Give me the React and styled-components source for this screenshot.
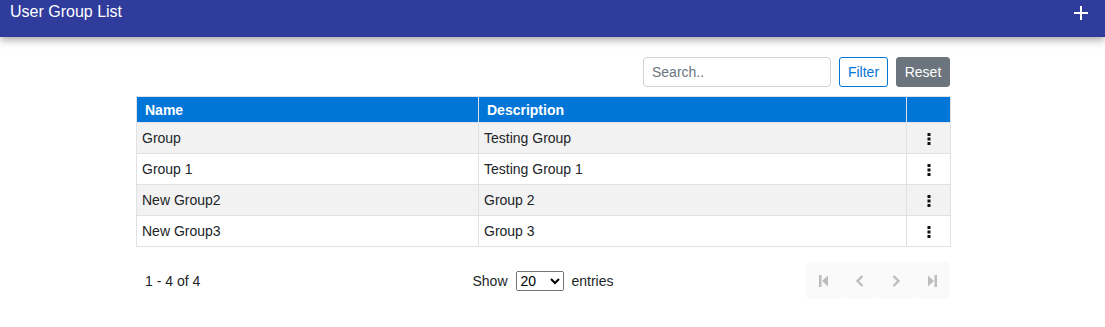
import React from 'react';
import styled, { createGlobalStyle } from 'styled-components';

const GlobalStyle = createGlobalStyle`
  body {
    margin: 0;
    font-family: "Liberation Sans", Arial, sans-serif;
    font-size: 14px;
    color: #212529;
    background: #fff;
  }
`;

const TopBar = styled.header`
  height: 37px;
  background: #2f3c9c;
  display: flex;
  justify-content: space-between;
  align-items: flex-start;
  padding: 0 16px 0 10px;
  box-shadow: 0 3px 8px rgba(0, 0, 0, 0.35);
  position: relative;
`;

const Title = styled.h1`
  margin: 3px 0 0;
  font-size: 16px;
  font-weight: normal;
  color: #fff;
`;

const AddButton = styled.button`
  border: none;
  background: none;
  padding: 0;
  margin-top: 5px;
  width: 16px;
  height: 16px;
  cursor: pointer;
  display: flex;
`;

const Content = styled.main`
  width: 814px;
  margin: 20px 0 0 136px;
`;

const Toolbar = styled.div`
  display: flex;
  justify-content: flex-end;
  gap: 8px;
  margin-bottom: 9px;
`;

const SearchInput = styled.input`
  width: 188px;
  height: 30px;
  box-sizing: border-box;
  border: 1px solid #ced4da;
  border-radius: 4px;
  padding: 0 8px;
  font-family: inherit;
  font-size: 14px;
  color: #495057;
  &::placeholder {
    color: #6c757d;
  }
`;

const Button = styled.button`
  height: 30px;
  width: ${p => p.$width}px;
  box-sizing: border-box;
  padding: 0;
  border-radius: 3px;
  font-family: inherit;
  font-size: 14px;
  cursor: pointer;
  border: 1px solid ${p => (p.$outline ? '#0275d8' : '#6c757d')};
  background: ${p => (p.$outline ? '#fff' : '#6c757d')};
  color: ${p => (p.$outline ? '#0275d8' : '#fff')};
`;

const Table = styled.table`
  width: 100%;
  border-collapse: collapse;
  border: 1px solid #dee2e6;
  table-layout: fixed;
`;

const Th = styled.th`
  background: #0275d8;
  color: #fff;
  font-weight: bold;
  text-align: left;
  height: 26px;
  padding: 0 8px;
  border-left: 1px solid #dee2e6;
  box-sizing: border-box;
  &:first-child {
    border-left: none;
  }
`;

const Row = styled.tr`
  background: ${p => (p.$striped ? '#f2f2f2' : '#fff')};
  border-top: 1px solid #dee2e6;
`;

const Td = styled.td`
  height: 30px;
  padding: 0 5px;
  border-left: 1px solid #dee2e6;
  text-align: ${p => (p.$center ? 'center' : 'left')};
  &:first-child {
    border-left: none;
  }
`;

const MenuButton = styled.button`
  border: none;
  background: none;
  padding: 2px 4px;
  cursor: pointer;
  display: inline-flex;
  vertical-align: middle;
`;

const Footer = styled.div`
  display: grid;
  grid-template-columns: 1fr auto 1fr;
  align-items: center;
  margin-top: 15px;
`;

const Count = styled.span`
  padding-left: 9px;
`;

const PageSize = styled.div`
  display: flex;
  align-items: center;
  gap: 8px;
`;

const Select = styled.select`
  font-family: inherit;
  font-size: 14px;
  height: 20px;
  width: 48px;
  color: #000;
`;

const Pager = styled.div`
  justify-self: end;
  display: flex;
`;

const PageButton = styled.button`
  width: 36px;
  height: 37px;
  border: none;
  border-radius: 4px;
  background: #fafafa;
  display: flex;
  align-items: center;
  justify-content: center;
  padding: 0;
  cursor: default;
`;

const groups = [
  { name: 'Group', description: 'Testing Group' },
  { name: 'Group 1', description: 'Testing Group 1' },
  { name: 'New Group2', description: 'Group 2' },
  { name: 'New Group3', description: 'Group 3' },
];

const PlusIcon = () => (
  <svg width="16" height="16" viewBox="0 0 16 16">
    <path d="M8 1v14M1 8h14" stroke="#fff" strokeWidth="2" />
  </svg>
);

const KebabIcon = () => (
  <svg width="4" height="12" viewBox="0 0 4 12">
    <rect x="0.5" y="0" width="3" height="3" fill="#111" />
    <rect x="0.5" y="4.5" width="3" height="3" fill="#111" />
    <rect x="0.5" y="9" width="3" height="3" fill="#111" />
  </svg>
);

const PagerIcon = ({ type }) => {
  const c = '#bdbdbd';
  const shapes = {
    first: (
      <>
        <rect x="1" y="1" width="2.5" height="12" fill={c} />
        <path d="M10 1.5 L4 7 L10 12.5 Z" fill={c} />
      </>
    ),
    prev: <path d="M8.5 2 L3.5 7 L8.5 12" stroke={c} strokeWidth="2.4" fill="none" />,
    next: <path d="M3.5 2 L8.5 7 L3.5 12" stroke={c} strokeWidth="2.4" fill="none" />,
    last: (
      <>
        <path d="M2 1.5 L8 7 L2 12.5 Z" fill={c} />
        <rect x="8.5" y="1" width="2.5" height="12" fill={c} />
      </>
    ),
  };
  return (
    <svg width="12" height="14" viewBox="0 0 12 14">
      {shapes[type]}
    </svg>
  );
};

const App = () => {
  return (
    <>
      <GlobalStyle />
      <TopBar>
        <Title>User Group List</Title>
        <AddButton aria-label="Add group">
          <PlusIcon />
        </AddButton>
      </TopBar>
      <Content>
        <Toolbar>
          <SearchInput type="text" placeholder="Search.." />
          <Button $outline $width={49}>Filter</Button>
          <Button $width={54}>Reset</Button>
        </Toolbar>
        <Table>
          <colgroup>
            <col style={{ width: 342 }} />
            <col style={{ width: 428 }} />
            <col style={{ width: 44 }} />
          </colgroup>
          <thead>
            <tr>
              <Th>Name</Th>
              <Th>Description</Th>
              <Th />
            </tr>
          </thead>
          <tbody>
            {groups.map((g, i) => (
              <Row key={g.name} $striped={i % 2 === 0}>
                <Td>{g.name}</Td>
                <Td>{g.description}</Td>
                <Td $center>
                  <MenuButton aria-label="Actions">
                    <KebabIcon />
                  </MenuButton>
                </Td>
              </Row>
            ))}
          </tbody>
        </Table>
        <Footer>
          <Count>1 - 4 of 4</Count>
          <PageSize>
            <span>Show</span>
            <Select defaultValue="20">
              <option value="10">10</option>
              <option value="20">20</option>
              <option value="50">50</option>
            </Select>
            <span>entries</span>
          </PageSize>
          <Pager>
            <PageButton><PagerIcon type="first" /></PageButton>
            <PageButton><PagerIcon type="prev" /></PageButton>
            <PageButton><PagerIcon type="next" /></PageButton>
            <PageButton><PagerIcon type="last" /></PageButton>
          </Pager>
        </Footer>
      </Content>
    </>
  );
};

export default App;
